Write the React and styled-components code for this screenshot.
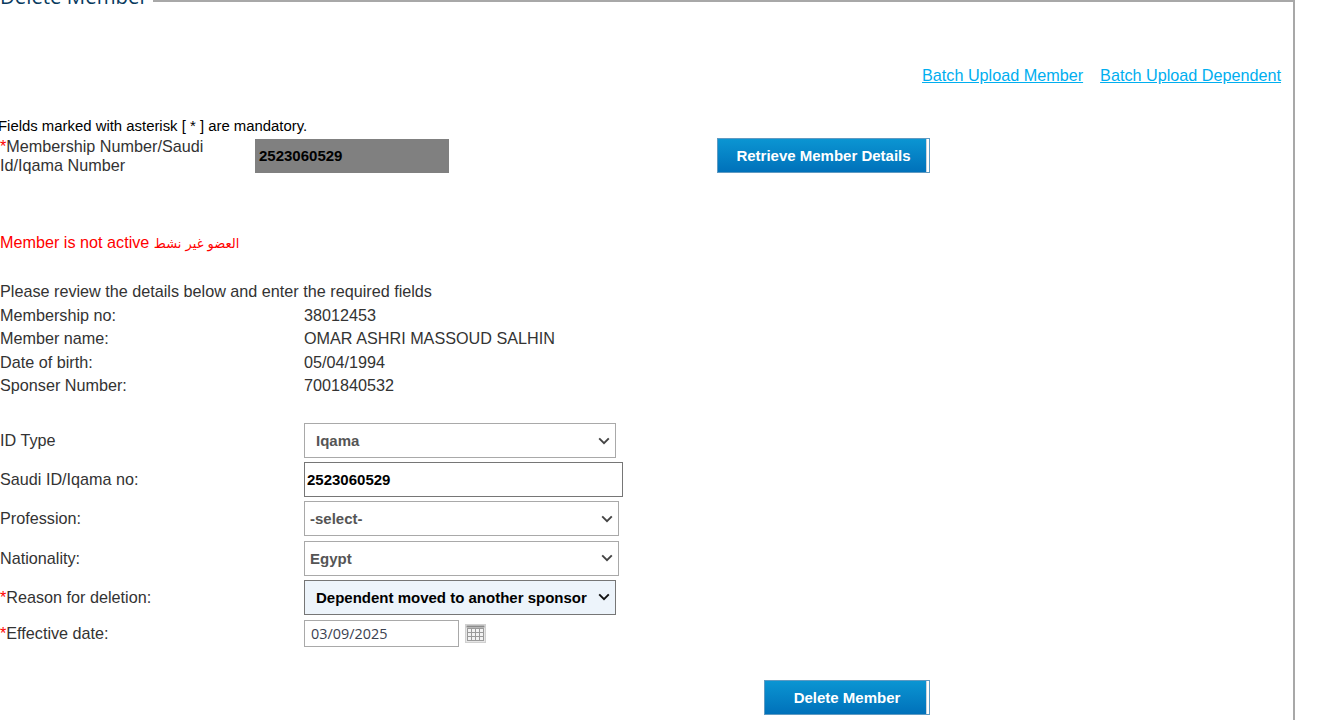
import styled, { createGlobalStyle } from "styled-components";

const GlobalStyle = createGlobalStyle`
  html, body {
    margin: 0;
    height: 720px;
    overflow: hidden;
    background: #fff;
    font-family: "Liberation Sans", Arial, sans-serif;
    color: #333;
  }
`;

const chevron = (color) =>
  `url("data:image/svg+xml,%3Csvg xmlns='http://www.w3.org/2000/svg' width='12' height='8' viewBox='0 0 12 8'%3E%3Cpath d='M1.2 1.4 6 6.2l4.8-4.8' fill='none' stroke='${color}' stroke-width='1.9'/%3E%3C/svg%3E")`;

const Panel = styled.fieldset`
  box-sizing: border-box;
  width: 1298px;
  height: 760px;
  margin: -17px 0 0 -3px;
  padding: 0 0 0 2px;
  border: solid #a8a8a8;
  border-width: 2px 2px 0 1px;
`;

const Title = styled.legend`
  padding: 0 5px 10px 0;
  font-family: "Open Sans", sans-serif;
  font-size: 20.4px;
  line-height: 26px;
  color: #083a5e;
`;

const LinkBar = styled.div`
  display: flex;
  justify-content: flex-end;
  gap: 17px;
  padding: 46px 12px 0 0;
`;

const BatchLink = styled.a`
  font-size: 16.2px;
  line-height: 20px;
  color: #00aeef;
  text-decoration: underline;
`;

const Mandatory = styled.div`
  margin: 33px 0 3px -2px;
  font-size: 14.9px;
  line-height: 16px;
  color: #000;
`;

const Star = styled.span`
  color: #f00;
`;

const SearchRow = styled.div`
  display: flex;
  align-items: flex-start;
  height: 36px;
`;

const SearchLabel = styled.div`
  box-sizing: border-box;
  width: 255px;
  padding-right: 40px;
  font-size: 16.2px;
  line-height: 19px;
`;

const SearchValue = styled.div`
  box-sizing: border-box;
  width: 194px;
  height: 34px;
  margin-top: 2px;
  padding-left: 4px;
  background: #808080;
  color: #000;
  font-size: 15px;
  font-weight: bold;
  line-height: 34px;
`;

const ActionButton = styled.button`
  box-sizing: border-box;
  height: 35px;
  width: ${(p) => p.$width}px;
  margin: ${(p) => p.$top || 0}px 0 0 ${(p) => p.$offset}px;
  padding: 0;
  border: 1px solid #5f9ac2;
  background: linear-gradient(to right, transparent calc(100% - 3px), #c9d3da calc(100% - 3px), #c9d3da calc(100% - 2px), #fff calc(100% - 2px)),
    linear-gradient(#0b95d2, #0071ba);
  color: #fff;
  font-family: "Liberation Sans", Arial, sans-serif;
  font-size: 15px;
  font-weight: bold;
`;

const ErrorLine = styled.div`
  margin-top: 59px;
  font-size: 16.2px;
  line-height: 20px;
  color: #f00;
`;

const ArabicText = styled.span`
  font-family: "DejaVu Sans", sans-serif;
  font-size: 13px;
`;

const Details = styled.div`
  margin-top: 26px;
  font-size: 16.2px;
  line-height: 23.5px;
`;

const DetailRow = styled.div`
  display: grid;
  grid-template-columns: 304px 1fr;
`;

const FormGrid = styled.div`
  margin-top: 23.5px;
`;

const FormRow = styled.div`
  display: grid;
  grid-template-columns: 304px 1fr;
  align-items: center;
  height: ${(p) => p.$height || 39.2}px;
  font-size: 16.2px;
`;

const Select = styled.select`
  box-sizing: border-box;
  display: block;
  appearance: none;
  width: ${(p) => p.$width}px;
  height: 35px;
  padding: 0 0 0 ${(p) => p.$pad}px;
  border: 1px solid ${(p) => (p.$active ? "#767676" : "#a9a9a9")};
  border-radius: 0;
  background: ${(p) => (p.$active ? "#edf4fb" : "#fff")} ${(p) => chevron(p.$active ? "%23111" : "%23444")} no-repeat right 5px center;
  color: ${(p) => (p.$active ? "#000" : "#555")};
  font-family: "Liberation Sans", Arial, sans-serif;
  font-size: 15px;
  font-weight: bold;
`;

const TextInput = styled.input`
  box-sizing: border-box;
  display: block;
  width: 319px;
  height: 35px;
  padding: 0 2px;
  border: 1px solid #767676;
  color: #000;
  font-family: "Liberation Sans", Arial, sans-serif;
  font-size: 15px;
  font-weight: bold;
`;

const DateCell = styled.div`
  display: flex;
  align-items: center;
  gap: 6px;
`;

const DateInput = styled.input`
  box-sizing: border-box;
  width: 155px;
  height: 27px;
  padding: 0 6px;
  border: 1px solid #a9a9a9;
  color: #3a4150;
  font-family: "Open Sans", sans-serif;
  font-size: 14.4px;
`;

const Footer = styled.div`
  margin-top: 30px;
`;

const CalendarIcon = () => (
  <svg width="21" height="19" viewBox="0 0 21 19" fill="none">
    <rect x="0.5" y="0.5" width="20" height="18" fill="#e6e6e6" stroke="#d0d0d0" />
    <rect x="1.5" y="1.5" width="18" height="2" fill="#8a8a8a" />
    <rect x="2.5" y="4.5" width="16" height="12" fill="#f2f2f2" stroke="#9a9a9a" />
    <path d="M6.5 5v11M10.5 5v11M14.5 5v11M3 8.5h15M3 12.5h15" stroke="#9a9a9a" />
  </svg>
);

const details = [
  ["Membership no:", "38012453"],
  ["Member name:", "OMAR ASHRI MASSOUD SALHIN"],
  ["Date of birth:", "05/04/1994"],
  ["Sponser Number:", "7001840532"],
];

const App = () => {
  return (
    <>
      <GlobalStyle />
      <Panel>
        <Title>Delete Member</Title>
        <LinkBar>
          <BatchLink href="#">Batch Upload Member</BatchLink>
          <BatchLink href="#">Batch Upload Dependent</BatchLink>
        </LinkBar>
        <Mandatory>Fields marked with asterisk [ * ] are mandatory.</Mandatory>
        <SearchRow>
          <SearchLabel>
            <Star>*</Star>Membership Number/Saudi Id/Iqama Number
          </SearchLabel>
          <SearchValue>2523060529</SearchValue>
          <ActionButton $width={213} $offset={268} $top={1}>
            Retrieve Member Details
          </ActionButton>
        </SearchRow>
        <ErrorLine>
          Member is not active <ArabicText>العضو غير نشط</ArabicText>
        </ErrorLine>
        <Details>
          <div>Please review the details below and enter the required fields</div>
          {details.map(([label, value]) => (
            <DetailRow key={label}>
              <span>{label}</span>
              <span>{value}</span>
            </DetailRow>
          ))}
        </Details>
        <FormGrid>
          <FormRow>
            <span>ID Type</span>
            <Select $width={312} $pad={11} defaultValue="Iqama">
              <option>Iqama</option>
            </Select>
          </FormRow>
          <FormRow>
            <span>Saudi ID/Iqama no:</span>
            <TextInput readOnly value="2523060529" />
          </FormRow>
          <FormRow>
            <span>Profession:</span>
            <Select $width={315} $pad={5} defaultValue="-select-">
              <option>-select-</option>
            </Select>
          </FormRow>
          <FormRow>
            <span>Nationality:</span>
            <Select $width={315} $pad={5} defaultValue="Egypt">
              <option>Egypt</option>
            </Select>
          </FormRow>
          <FormRow>
            <span>
              <Star>*</Star>Reason for deletion:
            </span>
            <Select $width={312} $pad={11} $active defaultValue="moved">
              <option value="moved">Dependent moved to another sponsor</option>
            </Select>
          </FormRow>
          <FormRow $height={33}>
            <span>
              <Star>*</Star>Effective date:
            </span>
            <DateCell>
              <DateInput readOnly value="03/09/2025" />
              <CalendarIcon />
            </DateCell>
          </FormRow>
        </FormGrid>
        <Footer>
          <ActionButton $width={166} $offset={764}>
            Delete Member
          </ActionButton>
        </Footer>
      </Panel>
    </>
  );
};

export default App;
